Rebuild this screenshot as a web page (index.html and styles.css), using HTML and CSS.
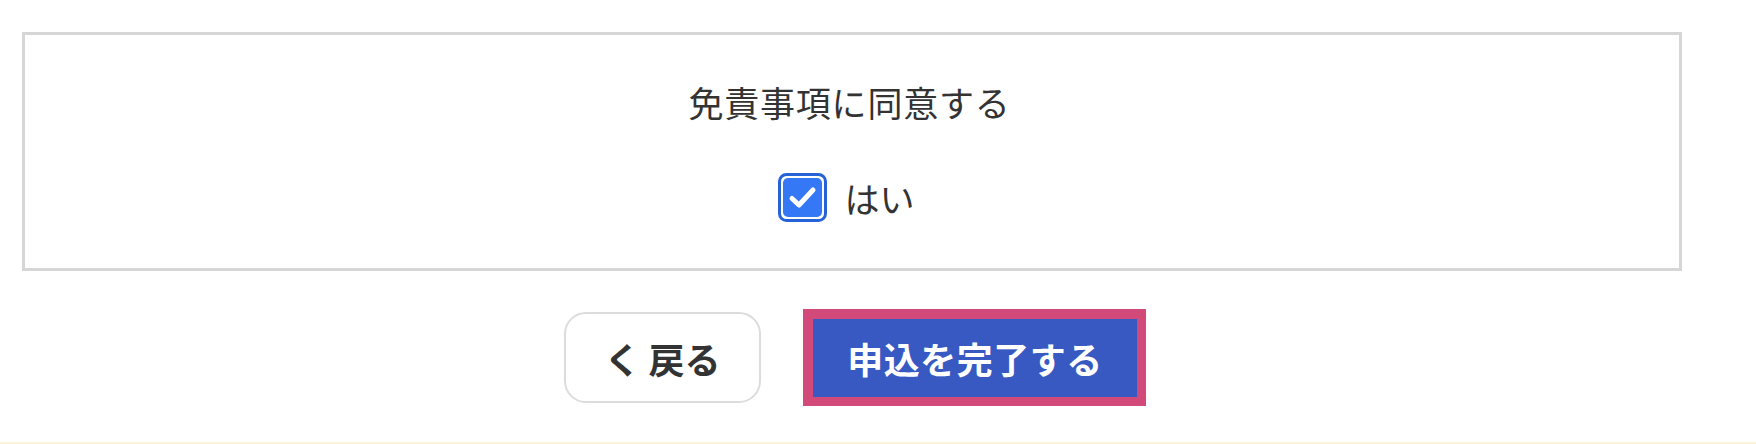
FILE: index.html
```html
<!DOCTYPE html>
<html lang="ja">
<head>
<meta charset="utf-8">
<title>免責事項</title>
<link rel="stylesheet" href="styles.css">
</head>
<body>
<div class="page">
  <section class="agree-box">
    <p class="agree-title">免責事項に同意する</p>
    <label class="agree-check">
      <svg class="checkbox" width="49" height="49" viewBox="0 0 49 49">
        <rect x="1.5" y="1.5" width="46" height="46" rx="7" fill="#fff" stroke="#2563d6" stroke-width="3"/>
        <rect x="5" y="5" width="39" height="39" rx="5" fill="#3478f6"/>
        <path d="M14 25.5 L21 32 L35 17" fill="none" stroke="#fff" stroke-width="5" stroke-linecap="round" stroke-linejoin="round"/>
      </svg>
      <span class="agree-label">はい</span>
    </label>
  </section>
  <div class="actions">
    <button class="btn-back" type="button">く 戻る</button>
    <button class="btn-submit" type="button">申込を完了する</button>
  </div>
</div>
<div class="footer-strip"></div>
</body>
</html>
```

FILE: styles.css
```css
html, body {
  margin: 0;
  padding: 0;
  background: #fff;
}
body {
  width: 1756px;
  height: 444px;
  display: flex;
  flex-direction: column;
  font-family: "Noto Sans CJK JP", "Noto Sans", sans-serif;
  color: #333;
  overflow: hidden;
}
.page {
  flex: 1;
  padding: 32px 0 0 22px;
}
.agree-box {
  width: 1660px;
  height: 239px;
  box-sizing: border-box;
  border: 3px solid #d6d6d6;
  display: flex;
  flex-direction: column;
  align-items: center;
  padding-top: 42px;
}
.agree-title {
  margin: 0;
  font-size: 35px;
  line-height: 50px;
  letter-spacing: 0.8px;
  color: #333;
  margin-left: -5px;
}
.agree-check {
  display: flex;
  align-items: center;
  gap: 17px;
  margin-top: 46px;
  margin-left: -11px;
}
.checkbox {
  display: block;
}
.agree-label {
  font-size: 35px;
  line-height: 49px;
  color: #333;
}
.actions {
  display: flex;
  justify-content: center;
  align-items: center;
  gap: 42px;
  width: 1660px;
  margin-top: 38px;
  padding-left: 6px;
  box-sizing: border-box;
}
.btn-back {
  width: 197px;
  height: 91px;
  box-sizing: border-box;
  border: 2px solid #dcdcdc;
  border-radius: 22px;
  background: #fff;
  font-family: inherit;
  font-size: 36px;
  font-weight: 700;
  color: #333;
  padding: 0;
}
.btn-submit {
  width: 343px;
  height: 97px;
  box-sizing: border-box;
  border: solid #d14a7a;
  border-width: 10px 9px 9px 10px;
  background: #3859c2;
  font-family: inherit;
  font-size: 36px;
  font-weight: 700;
  color: #fff;
  padding: 0;
  letter-spacing: 0.5px;
}
.footer-strip {
  height: 2px;
  background: #fdf3dc;
}
```
